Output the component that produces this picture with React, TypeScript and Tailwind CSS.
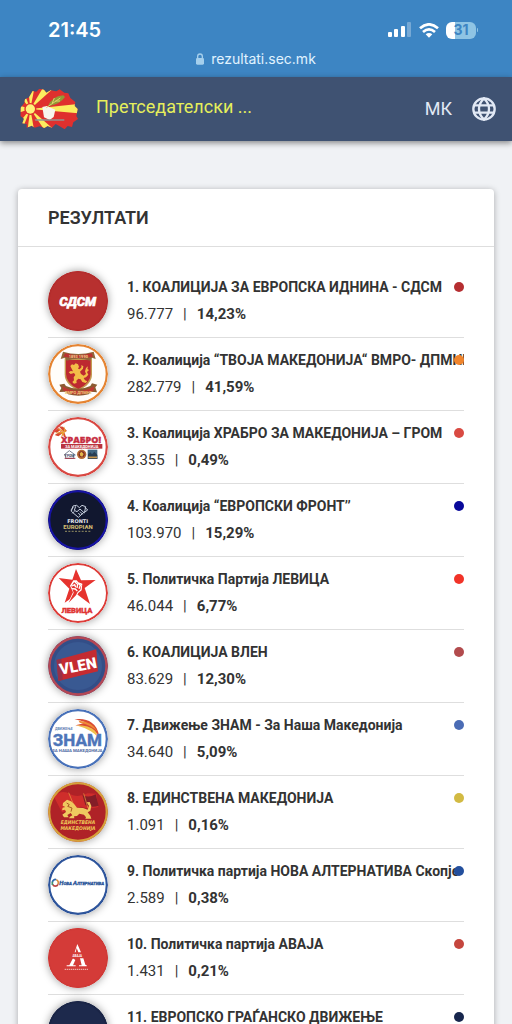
import type { ReactNode } from "react";

const display = "'Open Sans', 'Noto Sans', sans-serif";
const condensed = "'DejaVu Sans Condensed', 'DejaVu Sans', sans-serif";
const plain = "Roboto, sans-serif";

type LogoProps = { fill: string; ring: string; ringWidth?: number; label: string; children?: ReactNode };

function Logo({ fill, ring, ringWidth = 6, label, children }: LogoProps) {
  return (
    <svg
      viewBox="0 0 180 180"
      role="img"
      aria-label={label}
      className="size-[60px] shrink-0 rounded-full shadow-[0_0_8px_rgba(0,0,0,0.4)]"
    >
      <circle cx="90" cy="90" r="90" fill={fill} />
      {children}
      <circle cx="90" cy="90" r={90 - ringWidth / 2} fill="none" stroke={ring} strokeWidth={ringWidth} />
    </svg>
  );
}

const lionPath =
  "M12 22 L8 14 L13 9 L19 11 L24 6 L31 9 L34 16 L31 22 L36 24 L42 17 L40 12 L47 14 L46 22 L37 31 L40 38 L48 43 L55 38 L52 30 L55 20 L61 15 L59 23 L64 26 L58 32 L62 40 L55 48 L48 50 L52 57 L59 60 L54 65 L44 62 L39 54 L32 52 L26 58 L27 65 L19 67 L14 62 L19 57 L18 48 L23 41 L19 35 L9 38 L3 33 L9 29 L16 30 Z";

const sdsm = (
  <Logo label="СДСМ" fill="#b8302f" ring="#b32d2d" ringWidth={5}>
    <text x="89" y="104" textAnchor="middle" fill="#fff" stroke="#fff" strokeWidth="2" fontFamily={plain} fontSize="39" fontStyle="italic" fontWeight="800">
      СДСМ
    </text>
  </Logo>
);

const vmro = (
  <Logo label="ВМРО-ДПМНЕ" fill="#fffdfa" ring="#e58432" ringWidth={7}>
    <path d="M50 43 H132 V91 Q132 122 91 140 Q50 122 50 91Z" fill="#c49a50" />
    <path d="M54 48 H128 V90 Q128 118 91 135 Q54 118 54 90Z" fill="#bd2930" />
    <path d="M45 23 Q90 37 137 23 L143 45 L132 41 L126 50 Q90 39 56 50 L51 41 L38 45Z" fill="#91663a" />
    <path d="M51 28 Q90 39 131 28 L135 38 Q90 46 47 38Z" fill="#b93230" />
    <text x="91" y="41" textAnchor="middle" fill="#ecd28b" fontFamily={plain} fontSize="12" fontWeight="700">1893 1990</text>
    <path d={lionPath} transform="translate(59 52)" fill="#f3bd48" />
    <path d="M34 122 L49 119 L54 126 Q91 143 127 126 L132 118 L148 122 L142 130 L147 145 L129 143 L122 151 Q91 159 60 151 L53 143 L34 144 L40 132Z" fill="#8b5b31" />
    <path d="M43 127 Q90 154 139 127 L136 141 Q90 162 47 141Z" fill="#bf3832" />
    <text x="91" y="150" textAnchor="middle" fill="#edcd7d" fontFamily={plain} fontSize="12" fontWeight="700">ВМРО ДПМНЕ</text>
  </Logo>
);

const hrabro = (
  <Logo label="Храбро! За Македонија" fill="#fff" ring="#d94842" ringWidth={7}>
    <g fill="#d8482e">
      <path d="M18 43 L33 33 L38 39 L26 47Z" />
      <path d="M20 54 L39 42 L45 48 L31 58Z" />
      <path d="M32 28 L45 29 L57 42 L48 46Z" />
      <path d="M48 61 L44 49 L49 46 L54 60Z" />
    </g>
    <g fill="#e79c30">
      <path d="M23 32 L44 40 L48 47Z" />
      <path d="M17 48 L46 44 L48 50Z" />
      <path d="M39 61 L44 47 L50 50Z" />
      <path d="M48 28 L54 44 L47 48Z" />
    </g>
    <text x="39" y="77" fill="#c72f43" stroke="#c72f43" strokeWidth="1" fontFamily={display} fontSize="27" fontWeight="800">ХРАБРО!</text>
    <rect x="39" y="81" width="124" height="14" fill="#b9333e" />
    <text x="101" y="92" textAnchor="middle" fill="#fff" fontFamily={plain} fontSize="12" fontWeight="700">ЗА МАКЕДОНИЈА</text>
    <path d="M48 114 L64 101 L82 114 H77 V124 H53 V114Z" fill="none" stroke="#777f8e" strokeWidth="3" />
    <text x="65" y="119" textAnchor="middle" fill="#364865" fontFamily={plain} fontSize="10" fontWeight="800">ГРОМ</text>
    <path d="M50 124 H82" stroke="#a23849" strokeWidth="3" />
    <circle cx="101" cy="112" r="14" fill="#b46a32" />
    <circle cx="101" cy="112" r="9" fill="#7e2726" />
    <path d="M95 109 L101 104 L107 111 L103 119 L97 117Z" fill="#e2b849" />
    <rect x="119" y="98" width="29" height="28" fill="#416681" />
    <path d="M120 112 L127 106 L132 112 L139 104 L148 114 V126 H120Z" fill="#283f55" />
    <path d="M121 121 H147" stroke="#c7954d" strokeWidth="5" />
  </Logo>
);

const fronti = (
  <Logo label="Fronti Europian" fill="#11172f" ring="#1713a4" ringWidth={7}>
    <g fill="none" stroke="#c8d0df" strokeWidth="3" strokeLinejoin="round">
      <path d="M75 48 L86 46 L94 53 L102 46 L113 50 L110 65 L91 82 L70 64Z" />
      <path d="M76 52 L68 60 M111 52 L119 60 L108 68 M83 49 L79 61 L87 65 L96 57 L109 69 M96 65 L104 73 M91 69 L98 77 M79 64 L73 70" />
    </g>
    <text x="89" y="99" textAnchor="middle" fill="#e4e8ee" fontFamily="'DejaVu Sans', sans-serif" fontSize="15" fontWeight="700">FRONTI</text>
    <text x="90" y="117" textAnchor="middle" fill="#d1bd73" fontFamily={plain} fontSize="18" fontWeight="800">EUROPIAN</text>
    <path d="M51 124 H131" stroke="#7c7858" strokeWidth="4" strokeDasharray="6 4" />
  </Logo>
);

const levica = (
  <Logo label="Левица" fill="#fff" ring="#dd3c38" ringWidth={6}>
    <path d="M84 18 L99 52 L143 51 L110 75 L126 123 L87 94 L50 119 L64 77 L32 45 L73 50Z" fill="#e6332e" />
    <path d="M58 124 L75 88 L66 68 L76 52 L86 52 L91 58 L103 62 L101 82 L91 90 L86 98Z" fill="#fff" />
    <path d="M62 119 L77 89 L70 70 L78 58 L86 58 L91 63 L100 66 L97 80 L89 87 L84 97Z" fill="#e6332e" />
    <path d="M72 69 L80 65 L83 73 M81 57 L89 64 L87 75 M91 61 L97 67 L93 77 M72 77 L82 78 L88 84" fill="none" stroke="#fff" strokeWidth="4" />
    <text x="87" y="151" textAnchor="middle" fill="#df3434" stroke="#df3434" strokeWidth="1" fontFamily={plain} fontSize="23" fontWeight="900">ЛЕВИЦА</text>
  </Logo>
);

const vlen = (
  <Logo label="VLEN" fill="#334e87" ring="#b24755" ringWidth={8}>
    <circle cx="90" cy="90" r="72" fill="#395992" />
    <path d="M26 72 L145 40 L150 106 L31 135Z" fill="#c42b31" />
    <path d="M26 72 L40 68 L44 132 L31 135Z" fill="#963148" />
    <text x="90" y="106" textAnchor="middle" transform="rotate(-11 90 90)" fill="#fff" fontFamily={plain} fontSize="46" fontWeight="900">VLEN</text>
  </Logo>
);

const znam = (
  <Logo label="Движење ЗНАМ" fill="#fff" ring="#4871b9" ringWidth={7}>
    <path d="M79 31 Q111 26 131 41 Q149 53 153 80 Q131 52 82 49 Q105 45 110 39 Q98 34 79 31Z" fill="#d94b34" />
    <path d="M92 35 Q133 37 150 69 Q130 47 95 41Z" fill="#ef8b36" />
    <path d="M84 49 Q124 49 141 65 Q151 76 153 88 Q132 62 84 49Z" fill="#f1c04d" />
    <text x="21" y="63" fill="#617fb5" fontFamily={plain} fontSize="10" fontWeight="700">ДВИЖЕЊЕ</text>
    <text x="88" y="111" textAnchor="middle" fill="#4e75b9" stroke="#4e75b9" strokeWidth="1" fontFamily={plain} fontSize="51" fontWeight="800">ЗНАМ</text>
    <text x="88" y="130" textAnchor="middle" fill="#536ea5" fontFamily={plain} fontSize="13" fontWeight="800">ЗА НАША МАКЕДОНИЈА</text>
  </Logo>
);

const edinstvena = (
  <Logo label="Единствена Македонија" fill="#af2227" ring="#d5a13b" ringWidth={7}>
    <path d="M18 45 Q40 20 67 37 Q90 49 119 34 L145 35 L151 75 Q125 83 98 74 L42 91Z" fill="#cf2d2b" />
    <path d="M103 38 Q120 50 143 37 L152 71 Q130 78 112 69Z" fill="#831e27" />
    <path d="M62 32 L76 66 M107 34 L120 79" stroke="#e8a33f" strokeWidth="2" />
    <path d="M45 63 L57 53 L69 58 L79 67 L87 77 L105 78 L119 83 L123 72 L116 61 L125 60 L130 72 L127 86 L119 91 L127 101 L130 110 L112 110 L114 106 L108 98 L94 95 L87 102 L78 103 L79 109 L63 109 L66 104 L73 100 L68 93 L58 99 L62 106 L48 106 L43 98 L54 90 L51 83 L42 85 L44 77 L52 75 L44 71Z" fill="#efc95f" />
    <path d="M56 63 L64 68 L59 73 L72 78 L69 89" fill="none" stroke="#aa5b26" strokeWidth="3" />
    <text x="90" y="127" textAnchor="middle" fill="#efc858" fontFamily={condensed} fontSize="15" fontStyle="italic" fontWeight="700">ЕДИНСТВЕНА</text>
    <text x="90" y="144" textAnchor="middle" fill="#efc858" fontFamily={condensed} fontSize="15" fontStyle="italic" fontWeight="700">МАКЕДОНИЈА</text>
  </Logo>
);

const alternativa = (
  <Logo label="Нова Алтернатива" fill="#fff" ring="#2d549b" ringWidth={7}>
    <g fill="none" strokeWidth="5">
      <path d="M13 82 A9 10 0 0 1 25 74" stroke="#3169ad" />
      <path d="M25 74 A9 10 0 0 1 30 88" stroke="#da8d3c" />
      <path d="M30 88 A9 10 0 0 1 14 88" stroke="#bb4545" />
      <path d="M13 90 V80" stroke="#419170" />
    </g>
    <text x="34" y="91" fill="#315a9c" stroke="#315a9c" strokeWidth="1" fontFamily={plain} fontStyle="italic" fontWeight="800" fontSize="18">
      Н<tspan fontSize="13">ОВА </tspan>А<tspan fontSize="13">ЛТЕРНАТИВА</tspan>
    </text>
  </Logo>
);

const avaja = (
  <Logo label="АВАЈА" fill="#d43b38" ring="#cf3a37" ringWidth={5}>
    <path d="M80 73 L88 48 L99 73 H91 L86 60 L83 73Z M77 92 L82 96 L75 112 H83 V115 H56 V112 H64 L74 92Z M96 91 H106 L112 110 L116 112 V115 H93 V112 H101Z" fill="#fff" />
    <text x="88" y="87" textAnchor="middle" fill="#fff" fontFamily={plain} fontSize="9" fontWeight="700">АВАЈА</text>
    <path d="M50 124 H122" stroke="#f3c4bd" strokeWidth="3" strokeDasharray="4 2" />
  </Logo>
);

const civic = <Logo label="Европско граѓанско движење" fill="#1d294c" ring="#1a2546" />;

type Result = { name: string; votes?: string; share?: string; dot: string; logo: ReactNode };

const results: Result[] = [
  { name: "КОАЛИЦИЈА ЗА ЕВРОПСКА ИДНИНА - СДСМ", votes: "96.777", share: "14,23%", dot: "bg-[#b52e31]", logo: sdsm },
  { name: "Коалиција “ТВОЈА МАКЕДОНИЈА“ ВМРО- ДПМНЕ", votes: "282.779", share: "41,59%", dot: "bg-[#f0852d]", logo: vmro },
  { name: "Коалиција ХРАБРО ЗА МАКЕДОНИЈА – ГРОМ", votes: "3.355", share: "0,49%", dot: "bg-[#d94a42]", logo: hrabro },
  { name: "Коалиција “ЕВРОПСКИ ФРОНТ’’", votes: "103.970", share: "15,29%", dot: "bg-[#08089a]", logo: fronti },
  { name: "Политичка Партија ЛЕВИЦА", votes: "46.044", share: "6,77%", dot: "bg-[#f13328]", logo: levica },
  { name: "КОАЛИЦИЈА ВЛЕН", votes: "83.629", share: "12,30%", dot: "bg-[#b24b4d]", logo: vlen },
  { name: "Движење ЗНАМ - За Наша Македонија", votes: "34.640", share: "5,09%", dot: "bg-[#4b6cb5]", logo: znam },
  { name: "ЕДИНСТВЕНА МАКЕДОНИЈА", votes: "1.091", share: "0,16%", dot: "bg-[#d2ba43]", logo: edinstvena },
  { name: "Политичка партија НОВА АЛТЕРНАТИВА Скопје", votes: "2.589", share: "0,38%", dot: "bg-[#234f9d]", logo: alternativa },
  { name: "Политичка партија АВАЈА", votes: "1.431", share: "0,21%", dot: "bg-[#c5463e]", logo: avaja },
  { name: "ЕВРОПСКО ГРАЃАНСКО ДВИЖЕЊЕ", dot: "bg-[#17264d]", logo: civic },
];

function StatusBar() {
  return (
    <div className="shrink-0 bg-[#3d85c3] pt-4 pb-2 font-['Inter',sans-serif] text-white">
      <div className="flex h-7 items-center justify-between pr-[34px] pl-12">
        <span className="text-xl font-semibold">21:45</span>
        <div className="flex items-center gap-[7px]">
          <svg viewBox="0 0 24 16" className="h-4 w-6" aria-hidden="true" fill="#fff">
            <rect x="0" y="10" width="4" height="5" rx="1" />
            <rect x="6" y="7" width="4" height="8" rx="1" />
            <rect x="13" y="4" width="4" height="11" rx="1" />
            <rect x="19" y="0" width="4" height="15" rx="1" opacity="0.3" />
          </svg>
          <svg viewBox="0 0 60 45" className="h-[15px] w-5" aria-hidden="true" fill="none" stroke="#fff" strokeWidth="8">
            <path d="M3 16 Q30 -8 57 16" />
            <path d="M12 27 Q30 11 48 27" />
            <path d="M20 34 L30 44 L40 34 Q30 26 20 34Z" fill="#fff" stroke="none" />
          </svg>
          <div className="flex items-center gap-px">
            <span className="flex h-[17px] w-[30px] items-center justify-center rounded-md bg-linear-to-r from-white from-31% to-[#8fc4e4] to-31% text-sm font-bold text-[#3d85c3]">
              31
            </span>
            <span className="h-1 w-px rounded-r bg-[#8fc4e4]" />
          </div>
        </div>
      </div>
      <div className="mt-1 flex h-[21px] items-center justify-center gap-[7px] text-sm text-[#e0f3ff]">
        <svg viewBox="0 0 24 36" className="h-3 w-2" aria-hidden="true">
          <path d="M5 18 V10 Q5 3 12 3 Q19 3 19 10 V18" fill="none" stroke="#a5cfec" strokeWidth="4" />
          <rect x="0" y="15" width="24" height="20" rx="4" fill="#a5cfec" />
        </svg>
        <span>rezultati.sec.mk</span>
      </div>
    </div>
  );
}

function SiteMark() {
  return (
    <svg viewBox="0 0 174 126" className="h-[42px] w-[58px] shrink-0" role="img" aria-label="Државна изборна комисија">
      <defs>
        <clipPath id="country">
          <path d="M2 59 L13 44 L15 34 L27 28 L38 9 L49 11 L58 2 L72 5 L79 14 L92 7 L109 10 L119 4 L133 14 L145 16 L151 30 L166 42 L164 54 L173 63 L169 84 L174 93 L160 103 L156 117 L143 114 L134 124 L119 115 L107 108 L96 119 L83 114 L73 120 L59 115 L44 119 L35 113 L20 119 L20 108 L7 106 L12 92 L1 84Z" />
        </clipPath>
      </defs>
      <g clipPath="url(#country)">
        <rect width="174" height="126" fill="#df302e" />
        <g fill="#fbed60">
          <path d="M31 63 L174 48 V76Z" />
          <path d="M31 63 L72 -6 H108Z" />
          <path d="M31 63 L76 130 H108Z" />
          <path d="M31 63 L24 -4 H44Z" />
          <path d="M31 63 L22 130 H43Z" />
          <path d="M31 63 L-3 52 V74Z" />
          <path d="M31 63 L-2 22 L10 8Z" />
          <path d="M31 63 L-2 104 L10 116Z" />
        </g>
        <circle cx="31" cy="63" r="18" fill="#df302e" />
        <circle cx="31" cy="63" r="14" fill="#fff27a" />
      </g>
      <path d="M67 57 L80 54 L106 65 L101 87 L89 96 L72 88Z" fill="#f7f5ee" />
      <path d="M44 94 H133 V98 H46Z" fill="#939391" />
      <path d="M84 55 Q96 24 130 22 L135 27 Q119 49 91 53Z" fill="#929a35" />
      <path d="M79 59 L121 30 M97 45 L103 30 M106 39 L120 39" fill="none" stroke="#ded46b" strokeWidth="3" />
    </svg>
  );
}

function Navigation() {
  return (
    <header className="z-10 flex h-16 shrink-0 items-center bg-[#3f5272] pr-4 pl-5 shadow-[0_2px_6px_rgba(0,0,0,0.45)]">
      <SiteMark />
      <h1 className="ml-[18px] min-w-0 truncate pb-1 text-lg text-[#e6ef5b]">Претседателски ...</h1>
      <button type="button" className="ml-auto text-lg text-[#e2e9f5]">МК</button>
      <button type="button" aria-label="Јазик" className="ml-5 text-[#e2e9f5]">
        <svg viewBox="0 0 72 72" className="size-6" fill="none" stroke="currentColor" strokeWidth="7" aria-hidden="true">
          <circle cx="36" cy="36" r="32" />
          <path d="M36 4 C16 24 16 48 36 68 C56 48 56 24 36 4Z M8 25 H64 M8 47 H64" />
        </svg>
      </button>
    </header>
  );
}

export default function App() {
  return (
    <div className="flex h-screen flex-col overflow-hidden bg-[#f0f2f5] font-[Roboto,sans-serif] text-[#333]">
      <StatusBar />
      <Navigation />
      <main className="min-h-0 flex-1 px-[18px] pt-12">
        <section className="rounded-sm bg-white shadow-[0_1px_6px_rgba(0,0,0,0.3)]">
          <h2 className="border-b border-[#dedede] px-[30px] py-4 text-lg leading-[25px] font-semibold">РЕЗУЛТАТИ</h2>
          <ol className="px-[30px] pt-[18px]">
            {results.map((result, index) => (
              <li key={result.name} className="flex gap-[19px] border-b border-[#dedede] py-1.5">
                {result.logo}
                <div className="relative min-w-0 flex-1 overflow-hidden pt-1">
                  <h3 className="text-sm leading-6 font-bold whitespace-nowrap">
                    {index + 1}. {result.name}
                  </h3>
                  <span className={`absolute top-[11px] right-0 size-2.5 rounded-full ${result.dot}`} />
                  {result.votes && (
                    <p className="mt-[3px] flex gap-2.5 text-[15px] leading-6">
                      <span>{result.votes}</span>
                      <span>|</span>
                      <strong className="font-bold">{result.share}</strong>
                    </p>
                  )}
                </div>
              </li>
            ))}
          </ol>
        </section>
      </main>
    </div>
  );
}
